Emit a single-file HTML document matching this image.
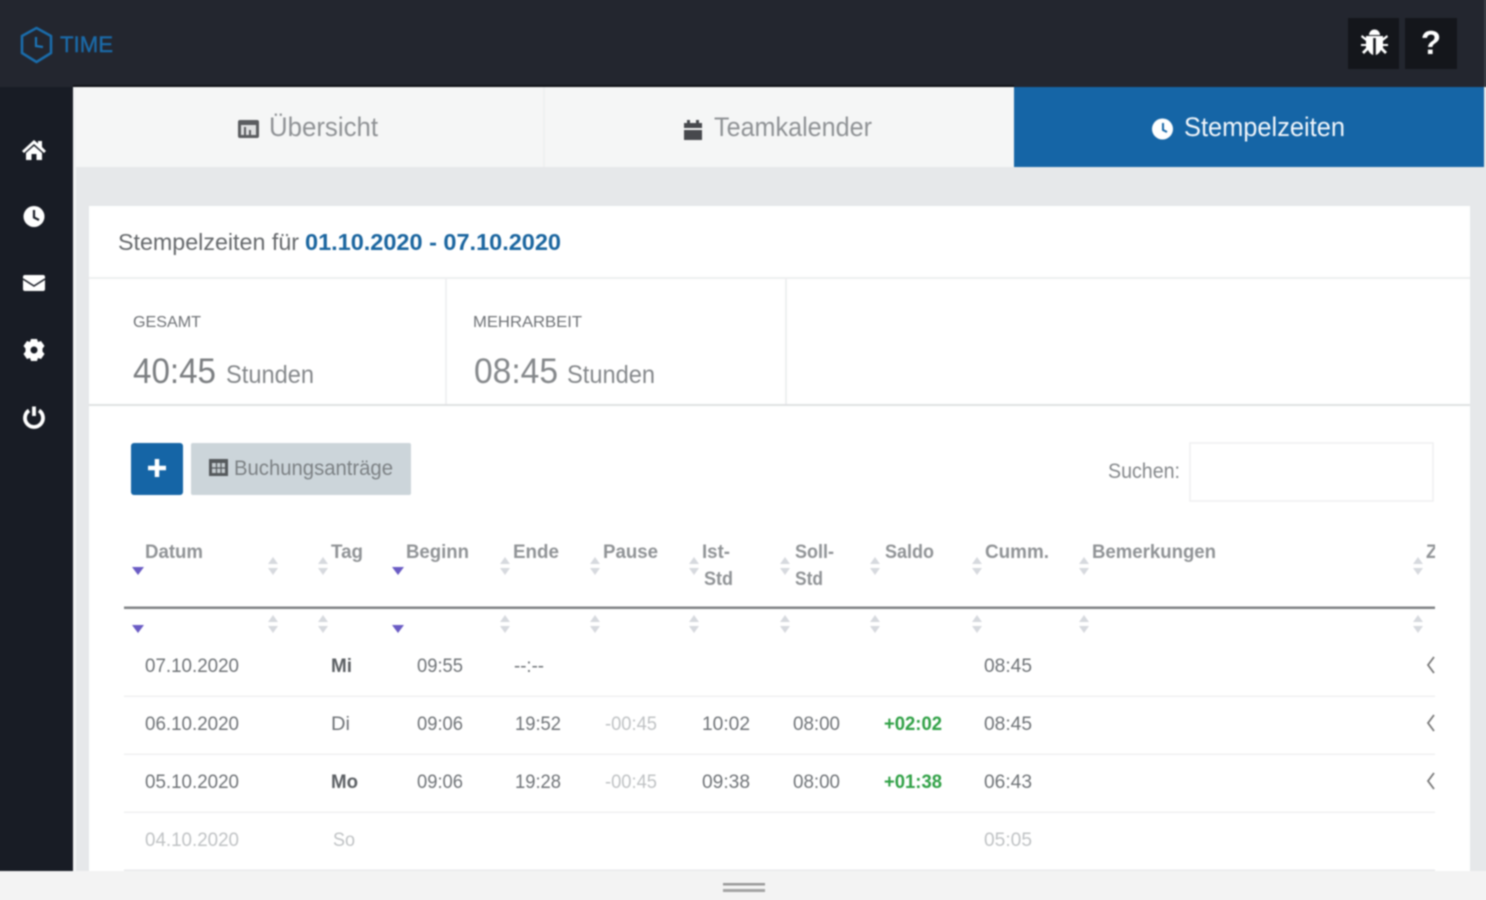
<!DOCTYPE html>
<html lang="de"><head><meta charset="utf-8"><title>Stempelzeiten</title>
<style>
html,body{margin:0;padding:0;width:1486px;height:900px;overflow:hidden;background:#f3f3f3}
body{position:relative}
svg{display:block;position:absolute;left:-10px;top:-10px;filter:blur(.8px)}
text{font-family:"Liberation Sans",sans-serif}
.h{font-size:19px;fill:#7d8184;font-weight:bold;opacity:.85}
.d{font-size:19px;fill:#6f7377}
.b{font-weight:bold;fill:#5c6064}
.l{fill:#bfc2c4}
.g{fill:#2fa045;font-weight:bold}
.s{fill:#d6d9de}
.p{fill:#6a5bc4}
</style></head><body>
<svg width="1506" height="920" viewBox="-10 -10 1506 920" xmlns="http://www.w3.org/2000/svg">
<defs>
<clipPath id="c"><rect x="80" y="500" width="1355" height="400"/></clipPath>
<g id="ar"><path class="s" d="M-5 -2 L0 -9 L5 -2Z M-5 2 L0 9 L5 2Z"/></g>
<path id="tr" class="p" d="M-6 -4 H6 L0 4Z"/>
</defs>
<rect x="-10" y="-10" width="1506" height="920" fill="#f3f3f3"/>
<!-- header -->
<rect x="-10" y="-10" width="1506" height="97" fill="#23262f"/>
<rect x="-10" y="87" width="83" height="784" fill="#181c25"/>
<rect x="73" y="85" width="941" height="2" fill="#101217"/>
<!-- content bg -->
<rect x="73" y="87" width="1423" height="784" fill="#e6e8ea"/>
<rect x="73" y="87" width="941" height="80" fill="#f5f6f6"/>
<rect x="73" y="87" width="3" height="784" fill="#f4f5f6"/>
<rect x="543" y="87" width="2" height="80" fill="#eff0f1"/>
<rect x="1014" y="87" width="470" height="80" fill="#1565a6"/>
<rect x="1484" y="-10" width="12" height="97" fill="#3a3d45"/>
<!-- panel -->
<rect x="89" y="206" width="1381" height="665" fill="#fff"/>
<rect x="89" y="277" width="1381" height="2" fill="#eeeff0"/>
<rect x="89" y="404" width="1381" height="2" fill="#dfe1e3"/>
<rect x="445" y="279" width="2" height="125" fill="#f0f1f2"/>
<rect x="785" y="279" width="2" height="125" fill="#eeeff0"/>
<!-- logo -->
<path d="M36.500 28 L51 36 V53 L36.500 62 L22 53 V36Z" fill="none" stroke="#1a6cab" stroke-width="2.600" stroke-linejoin="round"/>
<path d="M36 37 V46 L43 47" fill="none" stroke="#1d74b6" stroke-width="2.200"/>
<text x="60" y="52" font-size="22" fill="#1b6aa8" stroke="#1b6aa8" stroke-width=".4" textLength="53" lengthAdjust="spacingAndGlyphs">TIME</text>
<!-- top buttons -->
<rect x="1348" y="18" width="51" height="51" fill="#14161b"/>
<rect x="1405" y="18" width="52" height="51" fill="#14161b"/>
<path fill="#fff" d="M1369 35 a5.500 5.500 0 0 1 11 0Z M1366 36 H1383 V38 L1387 35 L1388 37 L1383 41 V44 H1388 V46 H1383 V48 L1387 52 L1385 54 L1381 50 Q1379 54 1375.800 55 V38 H1373.200 V55 Q1370 54 1368 50 L1364 54 L1362 52 L1366 48 V46 H1361 V44 H1366 V41 L1361 37 L1362 35 L1366 38Z"/>
<text x="1431" y="54" font-size="33" font-weight="bold" fill="#fff" text-anchor="middle">?</text>
<!-- sidebar icons -->
<path fill="#fff" d="M22 151 L34 140 L38 143.500 V141 H42 V147 L46 151 L44 153 L34 144 L24 153Z M26 153 L34 146 L42 153 V160 H36.500 V154 H31.500 V160 H26Z"/>
<circle cx="34" cy="216.500" r="10.500" fill="#fff"/>
<path d="M34 210 V217.500 L39 220" fill="none" stroke="#181c25" stroke-width="2.200"/>
<rect x="23" y="275" width="22" height="16" rx="2" fill="#fff"/>
<path d="M23 279 L34 286 L45 279" fill="none" stroke="#181c25" stroke-width="1.500"/>
<path fill="#fff" fill-rule="evenodd" d="M31 339 H37 L38 342 L41 341 L44.500 346 L42.500 348.500 V351.500 L44.500 354 L41 359 L38 358 L37 361 H31 L30 358 L27 359 L23.500 354 L25.500 351.500 V348.500 L23.500 346 L27 341 L30 342Z M34 346.500 a3.500 3.500 0 1 0 .01 0Z"/>
<path d="M29 410.500 A9 9 0 1 0 39 410.500" fill="none" stroke="#fff" stroke-width="3.800"/>
<path d="M34 406.500 V416" stroke="#fff" stroke-width="3.800"/>
<!-- tabs -->
<rect x="238" y="120" width="21" height="18" rx="2" fill="#5a5c5f"/>
<rect x="241" y="125" width="15" height="10" fill="#dfe0e1"/>
<path d="M245 127 V135 M250 130 V135" stroke="#5a5c5f" stroke-width="2"/>
<text x="269" y="136" font-size="27" fill="#8f9295" textLength="109" lengthAdjust="spacingAndGlyphs">Übersicht</text>
<path fill="#47494d" d="M684 123 H687 V120 H690 V123 H696 V120 H699 V123 H702 V128 H684Z M684 130 H702 V140 H684Z"/>
<text x="714" y="136" font-size="27" fill="#8f9295" textLength="158" lengthAdjust="spacingAndGlyphs">Teamkalender</text>
<circle cx="1162.500" cy="129" r="10.500" fill="#fff"/>
<path d="M1163 123 V130 L1167 132" fill="none" stroke="#1565a6" stroke-width="2"/>
<text x="1184" y="136" font-size="27" fill="#f1f6fb" textLength="161" lengthAdjust="spacingAndGlyphs">Stempelzeiten</text>
<!-- title -->
<text x="118" y="250" font-size="23" fill="#66696c" textLength="181" lengthAdjust="spacingAndGlyphs">Stempelzeiten für</text>
<text x="305" y="250" font-size="23" font-weight="bold" fill="#1a659f" textLength="256" lengthAdjust="spacingAndGlyphs">01.10.2020 - 07.10.2020</text>
<!-- stats -->
<text x="133" y="327" font-size="16" fill="#6f7276" textLength="68" lengthAdjust="spacingAndGlyphs">GESAMT</text>
<text x="473" y="327" font-size="16" fill="#6f7276" textLength="109" lengthAdjust="spacingAndGlyphs">MEHRARBEIT</text>
<text x="133" y="383" font-size="35" fill="#7b7e81" textLength="83" lengthAdjust="spacingAndGlyphs">40:45</text>
<text x="226" y="383" font-size="25" fill="#85888b" textLength="88" lengthAdjust="spacingAndGlyphs">Stunden</text>
<text x="474" y="383" font-size="35" fill="#85888b" textLength="84" lengthAdjust="spacingAndGlyphs">08:45</text>
<text x="567" y="383" font-size="25" fill="#85888b" textLength="88" lengthAdjust="spacingAndGlyphs">Stunden</text>
<!-- buttons -->
<rect x="131" y="443" width="52" height="52" rx="3" fill="#1565a6"/>
<path d="M157 459 V477 M148 468 H166" stroke="#fff" stroke-width="4.500"/>
<rect x="191" y="443" width="220" height="52" rx="2" fill="#ccd5da"/>
<rect x="209" y="459" width="19" height="17" fill="#55595c"/>
<path d="M212 463 H225 V473 H212Z" fill="#c5ccd0"/>
<path d="M212 468 H225 M216.500 463 V473 M221 463 V473" stroke="#55595c" stroke-width="1.200"/>
<text x="234" y="475" font-size="21" fill="#7c8184" textLength="159" lengthAdjust="spacingAndGlyphs">Buchungsanträge</text>
<text x="1108" y="478" font-size="21" fill="#85888b" textLength="72" lengthAdjust="spacingAndGlyphs">Suchen:</text>
<rect x="1190" y="443" width="243" height="58" fill="#fff" stroke="#eff0f1" stroke-width="1.500"/>
<!-- table -->
<g clip-path="url(#c)">
<text class="h" x="145" y="558" textLength="58" lengthAdjust="spacingAndGlyphs">Datum</text>
<text class="h" x="331" y="558" textLength="32" lengthAdjust="spacingAndGlyphs">Tag</text>
<text class="h" x="406" y="558" textLength="63" lengthAdjust="spacingAndGlyphs">Beginn</text>
<text class="h" x="513" y="558" textLength="46" lengthAdjust="spacingAndGlyphs">Ende</text>
<text class="h" x="603" y="558" textLength="55" lengthAdjust="spacingAndGlyphs">Pause</text>
<text class="h" x="702" y="558" textLength="28" lengthAdjust="spacingAndGlyphs">Ist-</text>
<text class="h" x="704" y="585" textLength="29" lengthAdjust="spacingAndGlyphs">Std</text>
<text class="h" x="795" y="558" textLength="39" lengthAdjust="spacingAndGlyphs">Soll-</text>
<text class="h" x="795" y="585" textLength="28" lengthAdjust="spacingAndGlyphs">Std</text>
<text class="h" x="885" y="558" textLength="49" lengthAdjust="spacingAndGlyphs">Saldo</text>
<text class="h" x="985" y="558" textLength="64" lengthAdjust="spacingAndGlyphs">Cumm.</text>
<text class="h" x="1092" y="558" textLength="124" lengthAdjust="spacingAndGlyphs">Bemerkungen</text>
<text class="h" x="1426" y="558">Z</text>
<use href="#ar" x="273" y="566"/><use href="#ar" x="323" y="566"/><use href="#ar" x="505" y="566"/><use href="#ar" x="595" y="566"/><use href="#ar" x="694" y="566"/><use href="#ar" x="785" y="566"/><use href="#ar" x="875" y="566"/><use href="#ar" x="977" y="566"/><use href="#ar" x="1084" y="566"/><use href="#ar" x="1418" y="566"/>
<use href="#ar" x="273" y="624"/><use href="#ar" x="323" y="624"/><use href="#ar" x="505" y="624"/><use href="#ar" x="595" y="624"/><use href="#ar" x="694" y="624"/><use href="#ar" x="785" y="624"/><use href="#ar" x="875" y="624"/><use href="#ar" x="977" y="624"/><use href="#ar" x="1084" y="624"/><use href="#ar" x="1418" y="624"/>
<use href="#tr" x="138" y="571"/><use href="#tr" x="398" y="571"/><use href="#tr" x="138" y="629"/><use href="#tr" x="398" y="629"/>
<rect x="124" y="606.500" width="1311" height="2.500" fill="#7f8284"/>
<rect x="124" y="695.500" width="1311" height="1.500" fill="#eff0f1"/>
<rect x="124" y="753.500" width="1311" height="1.500" fill="#eff0f1"/>
<rect x="124" y="811.500" width="1311" height="1.500" fill="#eff0f1"/>
<rect x="124" y="869.500" width="1311" height="1.500" fill="#e9eaeb"/>
<text class="d" x="145" y="672" textLength="94" lengthAdjust="spacingAndGlyphs">07.10.2020</text>
<text class="d b" x="331" y="672" textLength="21" lengthAdjust="spacingAndGlyphs">Mi</text>
<text class="d" x="417" y="672" textLength="46" lengthAdjust="spacingAndGlyphs">09:55</text>
<text class="d" x="514" y="672" textLength="30" lengthAdjust="spacingAndGlyphs">--:--</text>
<text class="d" x="984" y="672" textLength="48" lengthAdjust="spacingAndGlyphs">08:45</text>
<text class="d" x="145" y="730" textLength="94" lengthAdjust="spacingAndGlyphs">06.10.2020</text>
<text class="d" x="331" y="730" textLength="19" lengthAdjust="spacingAndGlyphs">Di</text>
<text class="d" x="417" y="730" textLength="46" lengthAdjust="spacingAndGlyphs">09:06</text>
<text class="d" x="515" y="730" textLength="46" lengthAdjust="spacingAndGlyphs">19:52</text>
<text class="d l" x="605" y="730" textLength="52" lengthAdjust="spacingAndGlyphs">-00:45</text>
<text class="d" x="702" y="730" textLength="48" lengthAdjust="spacingAndGlyphs">10:02</text>
<text class="d" x="793" y="730" textLength="47" lengthAdjust="spacingAndGlyphs">08:00</text>
<text class="d g" x="884" y="730" textLength="58" lengthAdjust="spacingAndGlyphs">+02:02</text>
<text class="d" x="984" y="730" textLength="48" lengthAdjust="spacingAndGlyphs">08:45</text>
<text class="d" x="145" y="788" textLength="94" lengthAdjust="spacingAndGlyphs">05.10.2020</text>
<text class="d b" x="331" y="788" textLength="27" lengthAdjust="spacingAndGlyphs">Mo</text>
<text class="d" x="417" y="788" textLength="46" lengthAdjust="spacingAndGlyphs">09:06</text>
<text class="d" x="515" y="788" textLength="46" lengthAdjust="spacingAndGlyphs">19:28</text>
<text class="d l" x="605" y="788" textLength="52" lengthAdjust="spacingAndGlyphs">-00:45</text>
<text class="d" x="702" y="788" textLength="48" lengthAdjust="spacingAndGlyphs">09:38</text>
<text class="d" x="793" y="788" textLength="47" lengthAdjust="spacingAndGlyphs">08:00</text>
<text class="d g" x="884" y="788" textLength="58" lengthAdjust="spacingAndGlyphs">+01:38</text>
<text class="d" x="984" y="788" textLength="48" lengthAdjust="spacingAndGlyphs">06:43</text>
<text class="d l" x="145" y="846" textLength="94" lengthAdjust="spacingAndGlyphs">04.10.2020</text>
<text class="d l" x="333" y="846" textLength="22" lengthAdjust="spacingAndGlyphs">So</text>
<text class="d l" x="984" y="846" textLength="48" lengthAdjust="spacingAndGlyphs">05:05</text>
<path d="M1434 657 L1428 665 L1434 673 M1434 715 L1428 723 L1434 731 M1434 773 L1428 781 L1434 789" fill="none" stroke="#777" stroke-width="1.800"/>
</g>
<!-- bottom -->
<rect x="-10" y="871" width="1506" height="39" fill="#f3f3f3"/>
<rect x="723" y="883" width="42" height="2.500" fill="#999"/>
<rect x="723" y="889" width="42" height="3" fill="#a3a3a3"/>
</svg>
</body></html>
